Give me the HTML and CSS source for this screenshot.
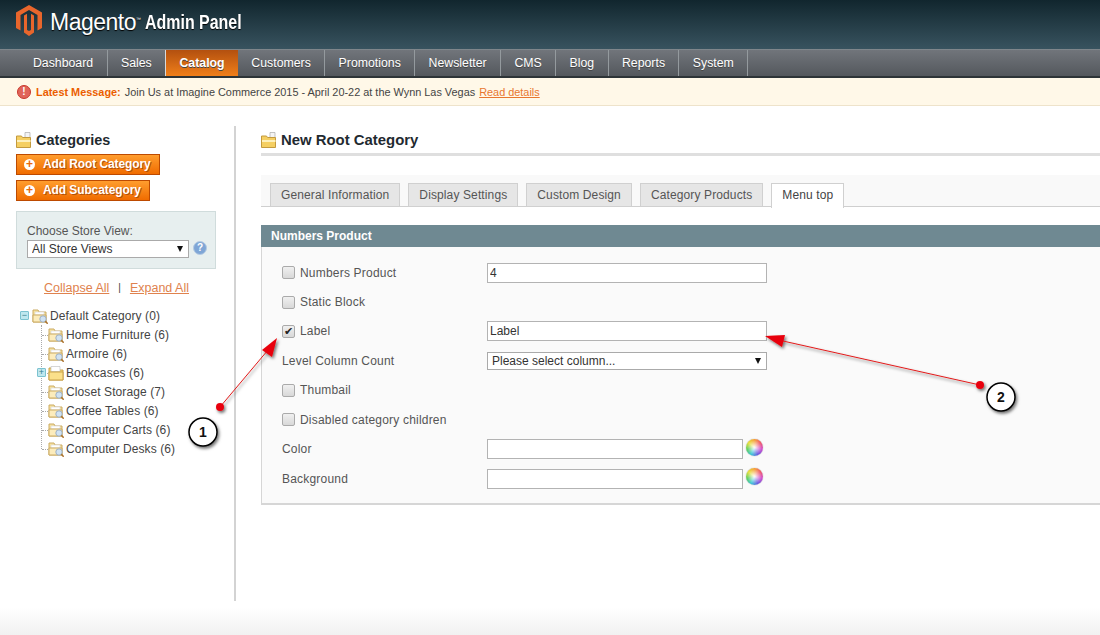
FILE: index.html
```html
<!DOCTYPE html>
<html lang="en">
<head>
  <meta charset="UTF-8">
  <title>Magento Admin Panel</title>
  <link rel="stylesheet" href="styles.css">
</head>
<body>
  <svg class="sprites" width="0" height="0">
    <symbol id="folder" viewBox="0 0 16 16">
      <path d="M1 3h5l1 2h8v10H1z" fill="#f6d873" stroke="#c9a24a"/>
      <path d="M3 1.500h9v5H3z" fill="#fff" stroke="#bbb" stroke-width=".6"/>
      <path d="M1 7h14v8H1z" fill="#fbe08a" stroke="#c9a24a"/>
    </symbol>
    <symbol id="folder-search" viewBox="0 0 16 16">
      <path d="M1 2h5l1 2h7v10H1z" fill="#f8e3a0" stroke="#cbab62"/>
      <path d="M3 4h9v3H3z" fill="#fff" stroke="#d5d5d5" stroke-width=".6"/>
      <path d="M1 7h13v7H1z" fill="#fcecbc" stroke="#cbab62"/>
      <circle cx="11" cy="11" r="3.200" fill="#cfe2f3" stroke="#9fb0c2"/>
      <path d="M13.300 13.300l2.400 2.400" stroke="#a9702c" stroke-width="1.500"/>
    </symbol>
    <symbol id="title-folder" viewBox="0 0 16 16">
      <path d="M9 0.500h5v8H9z" fill="#f4f4f4" stroke="#aaa" stroke-width=".7"/>
      <path d="M0.500 4h5l1 1.500h8V15.500H0.500z" fill="#f5cf62" stroke="#c39a3e"/>
      <path d="M1 8h13.500v2H1z" fill="#fdf0bc"/>
    </symbol>
  </svg>

  <header class="brand">
    <svg class="logo" viewBox="0 0 26 31" width="26" height="31">
      <path d="M13 0l13 7.500V23l-4.500 2.600V10L13 5l-8.500 5v15.600L0 23V7.500z" fill="#e9662c"/>
      <path d="M8 10.500l3-1.700V25l2 1 2-1V8.800l3 1.700v17L13 31l-5-3.500z" fill="#e9662c"/>
    </svg>
    <span class="brand-name">Magento<sup>™</sup></span>
    <span class="brand-sub">Admin Panel</span>
  </header>

  <nav class="nav">
    <a class="nav-item">Dashboard</a>
    <a class="nav-item">Sales</a>
    <a class="nav-item active">Catalog</a>
    <a class="nav-item">Customers</a>
    <a class="nav-item">Promotions</a>
    <a class="nav-item">Newsletter</a>
    <a class="nav-item">CMS</a>
    <a class="nav-item">Blog</a>
    <a class="nav-item">Reports</a>
    <a class="nav-item">System</a>
  </nav>

  <div class="notice">
    <span class="notice-icon">!</span>
    <strong>Latest Message:</strong>
    <span>Join Us at Imagine Commerce 2015 - April 20-22 at the Wynn Las Vegas</span>
    <a href="#">Read details</a>
  </div>

  <div class="page">
    <aside class="sidebar">
      <h3 class="side-title"><svg width="16" height="16"><use href="#title-folder"/></svg>Categories</h3>
      <button class="btn btn-root"><span class="plus">+</span>Add Root Category</button>
      <button class="btn btn-sub"><span class="plus">+</span>Add Subcategory</button>

      <div class="store-box">
        <label>Choose Store View:</label>
        <div class="store-row">
          <div class="select-wrap store-select">
            <select><option>All Store Views</option></select>
          </div>
          <span class="help">?</span>
        </div>
      </div>

      <div class="tree-links">
        <a href="#">Collapse All</a><span>|</span><a href="#">Expand All</a>
      </div>

      <div class="tree">
        <div class="tree-root">
          <span class="toggle">−</span>
          <svg width="16" height="16"><use href="#folder-search"/></svg>
          <span>Default Category (0)</span>
        </div>
        <ul class="tree-list">
          <li><svg width="16" height="16"><use href="#folder-search"/></svg>Home Furniture (6)</li>
          <li><svg width="16" height="16"><use href="#folder-search"/></svg>Armoire (6)</li>
          <li><span class="toggle">+</span><svg width="16" height="16"><use href="#folder"/></svg>Bookcases (6)</li>
          <li><svg width="16" height="16"><use href="#folder-search"/></svg>Closet Storage (7)</li>
          <li><svg width="16" height="16"><use href="#folder-search"/></svg>Coffee Tables (6)</li>
          <li><svg width="16" height="16"><use href="#folder-search"/></svg>Computer Carts (6)</li>
          <li><svg width="16" height="16"><use href="#folder-search"/></svg>Computer Desks (6)</li>
        </ul>
      </div>
    </aside>

    <main class="content">
      <h3 class="page-title"><svg width="16" height="16"><use href="#title-folder"/></svg>New Root Category</h3>

      <div class="tabs">
        <a class="tab">General Information</a>
        <a class="tab">Display Settings</a>
        <a class="tab">Custom Design</a>
        <a class="tab">Category Products</a>
        <a class="tab active">Menu top</a>
      </div>

      <h4 class="section-head">Numbers Product</h4>
      <div class="fieldset">
        <div class="row">
          <label><input type="checkbox">Numbers Product</label>
          <input class="text" type="text" value="4">
        </div>
        <div class="row">
          <label><input type="checkbox">Static Block</label>
        </div>
        <div class="row">
          <label><input type="checkbox" checked>Label</label>
          <input class="text" type="text" value="Label">
        </div>
        <div class="row">
          <label>Level Column Count</label>
          <div class="select-wrap column-select">
            <select><option>Please select column...</option></select>
          </div>
        </div>
        <div class="row">
          <label><input type="checkbox">Thumbail</label>
        </div>
        <div class="row">
          <label><input type="checkbox">Disabled category children</label>
        </div>
        <div class="row">
          <label>Color</label>
          <input class="text short" type="text">
          <span class="wheel"></span>
        </div>
        <div class="row">
          <label>Background</label>
          <input class="text short" type="text">
          <span class="wheel"></span>
        </div>
      </div>
    </main>
  </div>

  <div class="page-foot"></div>

  <!-- callouts drawn on top of the screenshot -->
  <svg class="callouts" width="1100" height="635" viewBox="0 0 1100 635">
    <defs>
      <filter id="soft" x="-40%" y="-40%" width="200%" height="200%">
        <feDropShadow dx="1.500" dy="2" stdDeviation="1.500" flood-color="#000" flood-opacity=".55"/>
      </filter>
    </defs>
    <g filter="url(#soft)">
      <path d="M220 407L268 350" stroke="#e21b1b" stroke-width="1"/>
      <path d="M277 338L262 350 272 357z" fill="#e8000a"/>
      <circle cx="220" cy="407" r="4" fill="#e8000a"/>
      <path d="M980 385L783 341" stroke="#e21b1b" stroke-width="1"/>
      <path d="M765 336L785 335 782 347z" fill="#e8000a"/>
      <circle cx="980" cy="385" r="4" fill="#e8000a"/>
      <circle cx="203" cy="432" r="14" fill="#fff" stroke="#000" stroke-width="1.500"/>
      <circle cx="1001" cy="397" r="14" fill="#fff" stroke="#000" stroke-width="1.500"/>
    </g>
    <text x="203" y="437" class="callout-num">1</text>
    <text x="1001" y="402" class="callout-num">2</text>
  </svg>
</body>
</html>
```

FILE: styles.css
```css
* {
  box-sizing: border-box;
}
body, html {
  margin: 0;
  padding: 0;
  width: 1100px;
  height: 635px;
  overflow: hidden;
  background: #fff;
  font-family: 'Liberation Sans', Arial, sans-serif;
  font-size: 12px;
  color: #444;
}
.sprites {
  position: absolute;
}
a {
  color: #e8762f;
}
h3, h4 {
  margin: 0;
}

/* header */
.brand {
  height: 49px;
  padding: 5px 0 0 16px;
  display: flex;
  align-items: flex-start;
  background: linear-gradient(#11262e, #38535f);
  color: #fff;
}
.logo {
  margin-right: 8px;
  flex: none;
}
.brand-name {
  width: 95px;
  flex: none;
  font-size: 23px;
  letter-spacing: -0.500px;
  line-height: 34px;
  text-shadow: 0 1px 1px #000;
}
.brand-name sup {
  font-size: 5px;
  vertical-align: 9px;
  line-height: 0;
}
.brand-sub {
  font-weight: bold;
  font-size: 21px;
  line-height: 34px;
  white-space: nowrap;
  transform: scaleX(.76);
  transform-origin: 0 0;
  text-shadow: 0 1px 1px #000;
}

/* main menu */
.nav {
  height: 29px;
  padding-left: 19.600px;
  display: flex;
  background: linear-gradient(#71757b, #54585d);
  border-top: 1px solid #7f868b;
  border-bottom: 2px solid #2d3437;
}
.nav-item {
  padding: 0 13.400px;
  font-size: 12.300px;
  line-height: 26px;
  color: #fff;
  border-right: 1px solid #949a9e;
  text-shadow: 0 1px 0 #444;
}
.nav-item.active {
  background: linear-gradient(#b3500f, #f07f1a);
  font-weight: bold;
  border-right: 0;
  border-left: 1px solid #d9d9d9;
  margin-left: -1px;
}

/* message bar */
.notice {
  height: 28px;
  padding-left: 17px;
  display: flex;
  align-items: center;
  gap: 3px;
  background: #fff8e8;
  border-bottom: 1px solid #eee3cb;
  font-size: 10.900px;
}
.notice strong {
  color: #eb5e00;
  margin: 0 1px 0 2px;
}
.notice a {
  margin-left: 1px;
}
.notice-icon {
  width: 14px;
  height: 14px;
  border-radius: 50%;
  background: #e0655a;
  border: 1px solid #c9372c;
  color: #fff;
  font-weight: bold;
  font-size: 10px;
  line-height: 12px;
  text-align: center;
}

/* page columns */
.page {
  display: flex;
  align-items: flex-start;
  padding: 20px 0 0 16px;
}
.sidebar {
  width: 220px;
  height: 475px;
  flex: none;
  padding-right: 18px;
  border-right: 2px solid #d3d3d3;
}
.side-title {
  display: flex;
  align-items: center;
  gap: 4px;
  font-size: 14.400px;
  line-height: 16px;
  color: #1f2a30;
  margin-bottom: 6px;
  padding-top: 6px;
}
.btn {
  display: flex;
  align-items: center;
  height: 21px;
  padding: 0 0 1px 7px;
  border: 1px solid #bd4a00;
  background: linear-gradient(#ff9d2e, #f06c00);
  color: #fff;
  font: bold 12px 'Liberation Sans', sans-serif;
  letter-spacing: -0.100px;
  white-space: nowrap;
  text-shadow: 1px 1px 0 #b14f0a;
}
.btn-root {
  width: 144px;
}
.btn-sub {
  width: 134px;
  margin-top: 5px;
}
.plus {
  width: 11px;
  height: 11px;
  border-radius: 50%;
  background: #fff;
  color: #e8680a;
  font-size: 12px;
  line-height: 10px;
  text-align: center;
  margin-right: 8px;
  text-shadow: none;
}
.store-box {
  height: 58px;
  margin-top: 10px;
  padding: 12px 8px 0 10px;
  background: #e7efef;
  border: 1px solid #d0dcdc;
  font-size: 12px;
  color: #555;
}
.store-box label {
  display: block;
  line-height: 14px;
}
.store-row {
  display: flex;
  align-items: center;
  gap: 4px;
}
.select-wrap {
  position: relative;
  height: 18px;
  background: #fff;
  border: 1px solid #aaa;
}
.select-wrap::after {
  content: "";
  position: absolute;
  right: 5px;
  top: 5px;
  border-left: 3.500px solid transparent;
  border-right: 3.500px solid transparent;
  border-top: 6px solid #111;
}
.select-wrap select {
  appearance: none;
  width: 100%;
  height: 100%;
  display: block;
  border: 0;
  padding: 0 0 0 4px;
  background: transparent;
  font: 12px 'Liberation Sans', sans-serif;
  color: #333;
}
.store-select {
  width: 162px;
  flex: none;
  margin-top: 2px;
}
.help {
  width: 14px;
  height: 14px;
  flex: none;
  border-radius: 50%;
  background: #7fa6d6;
  border: 1px solid #b5cbe3;
  color: #fff;
  font-weight: bold;
  font-size: 10px;
  line-height: 12px;
  text-align: center;
}
.tree-links {
  display: flex;
  justify-content: center;
  gap: 9px;
  margin-top: 12px;
  padding-left: 1px;
  font-size: 12.500px;
  line-height: 14px;
}
.tree-links a {
  color: #e0824e;
}
.tree-links span {
  color: #444;
  font-size: 10px;
}
.tree {
  margin-top: 11px;
  letter-spacing: 0.100px;
}
.tree-root,
.tree-list li {
  display: flex;
  align-items: center;
  height: 19px;
  white-space: nowrap;
}
.tree-root {
  padding-left: 4px;
}
.tree-root svg {
  margin: 0 2px 0 3px;
}
.toggle {
  width: 9px;
  height: 9px;
  flex: none;
  background: #bfe7ee;
  border: 1px solid #7cc2d0;
  border-radius: 1px;
  color: #35808f;
  font-size: 9px;
  line-height: 7px;
  text-align: center;
}
.tree-list {
  list-style: none;
  margin: 0 0 0 25px;
  padding: 0;
  border-left: 1px dotted #aaa;
  height: 124px;
}
.tree-list li {
  padding-left: 6px;
  position: relative;
}
.tree-list li::before {
  content: "";
  position: absolute;
  left: 0;
  top: 10px;
  width: 6px;
  border-top: 1px dotted #aaa;
}
.tree-list li svg {
  margin-right: 2px;
}
.tree-list li .toggle {
  position: absolute;
  left: -5px;
  top: 5px;
  z-index: 1;
}

/* right side */
.content {
  flex: 1;
  padding-left: 25px;
  min-width: 0;
}
.page-title {
  display: flex;
  align-items: center;
  gap: 4px;
  height: 30px;
  border-bottom: 3px solid #dfdfdf;
  font-size: 14.900px;
  color: #1f2a30;
}
.tabs {
  display: flex;
  gap: 8px;
  height: 32px;
  margin-top: 19px;
  padding: 8px 0 0 9px;
  background: #f9f9f9;
  border-bottom: 1px solid #cfcfcf;
}
.tab {
  padding: 0 10px;
  height: 24px;
  line-height: 23px;
  background: #e6e6e6;
  border: 1px solid #d0d0d0;
  color: #555;
  letter-spacing: 0.120px;
}
.tab.active {
  height: 25px;
  background: #fff;
  border-bottom: 0;
  color: #444;
}
.section-head {
  margin-top: 18px;
  height: 22px;
  padding-left: 10px;
  background: #6f8992;
  color: #fff;
  font-size: 12px;
  line-height: 22px;
}
.fieldset {
  height: 258px;
  padding: 10.900px 0 0 20px;
  background: #fafafa;
  border-left: 1px solid #d6d6d6;
  border-bottom: 2px solid #d6d6d6;
}
.row {
  display: flex;
  align-items: center;
  height: 29.450px;
}
.row label {
  display: flex;
  align-items: center;
  width: 205px;
  color: #555;
  letter-spacing: 0.200px;
}
.row input[type=checkbox] {
  appearance: none;
  width: 13px;
  height: 13px;
  margin: 0 5px 0 0;
  border: 1px solid #aaa;
  border-radius: 2px;
  background: linear-gradient(#f0f0f0, #d8d8d8);
  position: relative;
}
.row input[type=checkbox]:checked::after {
  content: "✔";
  position: absolute;
  left: 1px;
  top: -1px;
  font: 11px 'DejaVu Sans', sans-serif;
  color: #222;
}
.text {
  width: 280px;
  height: 20px;
  padding: 0 2px;
  background: #fff;
  border: 1px solid #b3b3b3;
  font: 12px 'Liberation Sans', sans-serif;
  color: #333;
}
.text.short {
  width: 256px;
}
.column-select {
  width: 280px;
}
.wheel {
  width: 17px;
  height: 17px;
  margin: -4px 0 0 3px;
  border-radius: 50%;
  background:
    radial-gradient(circle at 50% 50%, rgba(255,255,255,.9) 5%, rgba(255,255,255,0) 62%),
    conic-gradient(#f5a13a, #f05a6a, #d04fd0, #6a5be0, #3fc7d8, #62cf5c, #e8e03c, #f5a13a);
  box-shadow: 0 0 1px #888;
}

/* fades out at the bottom of the page */
.page-foot {
  position: absolute;
  left: 0;
  right: 0;
  bottom: 0;
  height: 27px;
  background: linear-gradient(#fff, #f1f1f1);
}

.callouts {
  position: absolute;
  left: 0;
  top: 0;
  pointer-events: none;
}
.callout-num {
  font: bold 14px 'Liberation Sans', sans-serif;
  text-anchor: middle;
  fill: #111;
}
```
